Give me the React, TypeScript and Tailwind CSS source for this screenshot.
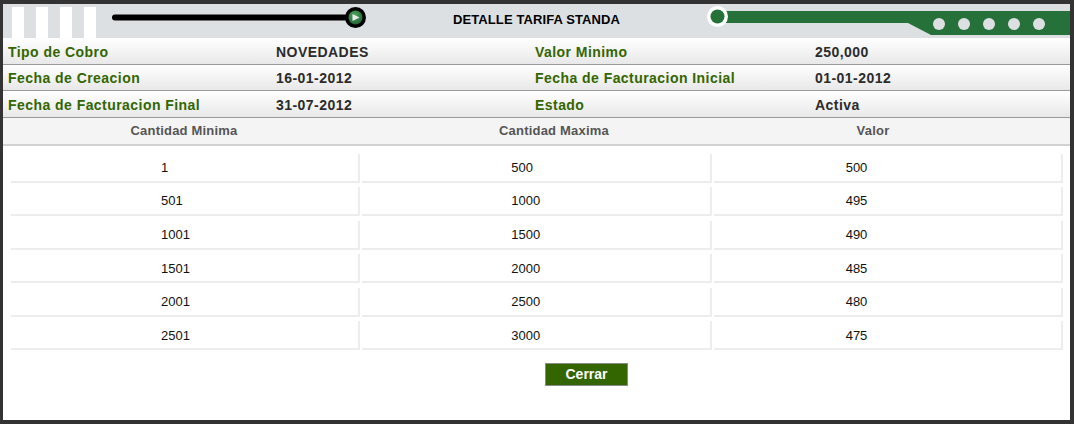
import React from "react";

const infoRows = [
  ["Tipo de Cobro", "NOVEDADES", "Valor Minimo", "250,000"],
  ["Fecha de Creacion", "16-01-2012", "Fecha de Facturacion Inicial", "01-01-2012"],
  ["Fecha de Facturacion Final", "31-07-2012", "Estado", "Activa"],
];

const data = [
  ["1", "500", "500"],
  ["501", "1000", "495"],
  ["1001", "1500", "490"],
  ["1501", "2000", "485"],
  ["2001", "2500", "480"],
  ["2501", "3000", "475"],
];

function LeftDeco() {
  return (
    <svg width="365" height="34" viewBox="0 0 365 34" className="block shrink-0">
      <defs>
        <radialGradient id="kg" cx="45%" cy="35%" r="70%">
          <stop offset="0%" stopColor="#4fa862" />
          <stop offset="100%" stopColor="#1d5e2c" />
        </radialGradient>
      </defs>
      {[9, 33, 57, 81].map((x) => (
        <rect key={x} x={x} y={3} width={12} height={31} fill="#ffffff" />
      ))}
      <line x1="112" y1="13.5" x2="350" y2="13.5" stroke="#000" strokeWidth="6" strokeLinecap="round" />
      <circle cx="352.5" cy="13.5" r="10.5" fill="#000" />
      <circle cx="352.5" cy="13.5" r="7" fill="url(#kg)" />
      <polygon points="349.5,10 349.5,17 356.5,13.5" fill="#e8ece8" />
    </svg>
  );
}

function RightDeco() {
  return (
    <svg width="365" height="34" viewBox="0 0 365 34" className="block shrink-0">
      <polygon points="20,7 365,7 365,31 226,31 203,19 20,19" fill="#26713a" />
      <circle cx="12.5" cy="12.5" r="10.5" fill="#ffffff" />
      <circle cx="12.5" cy="12.5" r="7" fill="#26713a" />
      {[234, 259, 284, 309, 334].map((x) => (
        <circle key={x} cx={x} cy={20} r={6} fill="#dde0e3" />
      ))}
    </svg>
  );
}

export default function App() {
  return (
    <div
      className="w-[1074px] h-[424px] bg-[#333333] pt-[4px] pl-[3px] pr-[4px] pb-[4px]"
      style={{ fontFamily: '"Liberation Sans", Arial, sans-serif' }}
    >
      <div className="bg-white h-full flex flex-col">
        {/* header band */}
        <div className="h-[34px] bg-[#dde0e3] flex shrink-0">
          <LeftDeco />
          <div className="flex-1 flex justify-center pt-[8px]">
            <span className="text-[13px] leading-[15px] font-bold text-black tracking-[0.1px]">DETALLE TARIFA STANDA</span>
          </div>
          <RightDeco />
        </div>

        {/* info rows */}
        {infoRows.map((r, i) => (
          <div
            key={i}
            className="h-[26.5px] shrink-0 grid grid-cols-[269px_259px_280px_1fr] items-center pt-[2px] border-b border-[#9a9a9a] bg-linear-to-b from-white to-[#e8e8e8] text-[14px] leading-[16px] font-bold tracking-[0.45px]"
          >
            <div className="pl-[5px] text-[#336600] whitespace-nowrap">{r[0]}</div>
            <div className="pl-[4px] text-[#2b2b2b] whitespace-nowrap">{r[1]}</div>
            <div className="pl-[4px] text-[#336600] whitespace-nowrap">{r[2]}</div>
            <div className="pl-[4px] text-[#2b2b2b] whitespace-nowrap">{r[3]}</div>
          </div>
        ))}

        {/* table header */}
        <div className="h-[28px] shrink-0 grid grid-cols-[362px_378px_260px_1fr] items-center pt-[1px] bg-[#f4f4f4] border-b-2 border-[#d2d2d2] text-[13px] font-bold text-[#555555] tracking-[0.2px]">
          <div className="text-center">Cantidad Minima</div>
          <div className="text-center">Cantidad Maxima</div>
          <div className="text-center">Valor</div>
          <div />
        </div>

        {/* table body */}
        <div className="pt-[8px] pl-[8px] pr-[7px] flex flex-col gap-[4.6px]">
          {data.map((r, i) => (
            <div key={i} className="grid grid-cols-3 gap-x-[2px] h-[29px] text-[13px] text-[#111111]">
              <div className="flex items-center pl-[150px] pt-[1px] border-b-2 border-r-2 border-[#ededed]">{r[0]}</div>
              <div className="flex items-center pl-[149px] pt-[1px] border-b-2 border-r-2 border-[#ededed]">{r[1]}</div>
              <div className="flex items-center pl-[132px] pt-[1px] border-b-2 border-r-2 border-[#ededed]">{r[2]}</div>
            </div>
          ))}
        </div>

        <div className="pl-[542px] mt-[13px]">
          <button className="w-[83px] h-[23px] bg-[#336600] border border-[#8a8a8a] text-white text-[14px] font-bold flex items-center justify-center">
            Cerrar
          </button>
        </div>
      </div>
    </div>
  );
}
